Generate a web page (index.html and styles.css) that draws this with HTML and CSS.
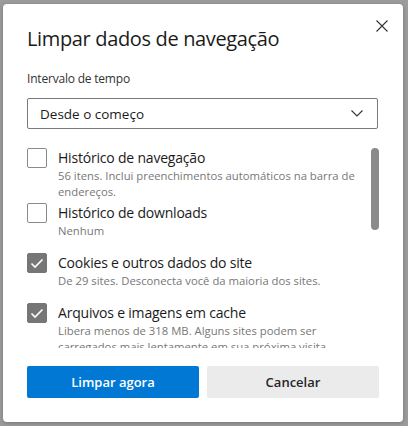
FILE: index.html
```html
<!DOCTYPE html>
<html lang="pt-BR">
<head>
<meta charset="utf-8">
<title>Limpar dados de navegação</title>
<link rel="stylesheet" href="styles.css">
</head>
<body>
<div class="backdrop">
  <div class="dialog">
    <button class="close" aria-label="Fechar">
      <svg width="12" height="12" viewBox="0 0 12 12"><path d="M0.5 0.5 L11.5 11.5 M11.5 0.5 L0.5 11.5" stroke="#333" stroke-width="1.1" fill="none"/></svg>
    </button>
    <h1 class="title">Limpar dados de navegação</h1>
    <div class="field-label">Intervalo de tempo</div>
    <div class="select">
      <span>Desde o começo</span>
      <svg width="12" height="7" viewBox="0 0 12 7"><path d="M0.5 0.5 L6 6 L11.5 0.5" stroke="#333" stroke-width="1.1" fill="none"/></svg>
    </div>
    <div class="list">
      <div class="items">
        <div class="item tall">
          <span class="cb"></span>
          <div class="text">
            <div class="label">Histórico de navegação</div>
            <div class="desc">56 itens. Inclui preenchimentos automáticos na barra de endereços.</div>
          </div>
        </div>
        <div class="item">
          <span class="cb"></span>
          <div class="text">
            <div class="label">Histórico de downloads</div>
            <div class="desc">Nenhum</div>
          </div>
        </div>
        <div class="item">
          <span class="cb checked"><svg width="14" height="11" viewBox="0 0 14 11"><path d="M1.5 5.5 L5 9 L12.5 1.5" stroke="#fff" stroke-width="1.6" fill="none"/></svg></span>
          <div class="text">
            <div class="label">Cookies e outros dados do site</div>
            <div class="desc">De 29 sites. Desconecta você da maioria dos sites.</div>
          </div>
        </div>
        <div class="item">
          <span class="cb checked"><svg width="14" height="11" viewBox="0 0 14 11"><path d="M1.5 5.5 L5 9 L12.5 1.5" stroke="#fff" stroke-width="1.6" fill="none"/></svg></span>
          <div class="text">
            <div class="label">Arquivos e imagens em cache</div>
            <div class="desc">Libera menos de 318 MB. Alguns sites podem ser carregados mais lentamente em sua próxima visita.</div>
          </div>
        </div>
      </div>
      <div class="scrollbar"></div>
    </div>
    <div class="actions">
      <button class="btn primary">Limpar agora</button>
      <button class="btn secondary">Cancelar</button>
    </div>
  </div>
</div>
</body>
</html>
```

FILE: styles.css
```css
* { box-sizing: border-box; }
html, body {
  margin: 0;
  padding: 0;
  background: #9c9c9c;
}
body {
  font-family: "Open Sans", "Noto Sans", sans-serif;
  color: #1b1b1b;
}
.backdrop {
  padding: 4px 5px 4px 3px;
  height: 426px;
}
.dialog {
  position: relative;
  width: 400px;
  height: 418px;
  background: #fff;
  border-radius: 4px;
  box-shadow: 0 1px 4px rgba(0,0,0,0.25);
  padding: 0 24px;
  display: flex;
  flex-direction: column;
}
.close {
  position: absolute;
  top: 12px;
  right: 11px;
  width: 20px;
  height: 20px;
  border: 0;
  background: none;
  padding: 4px;
  display: flex;
}
.title {
  margin: 21px 0 0;
  font-size: 20px;
  letter-spacing: -0.35px;
  font-weight: 400;
  line-height: 28px;
  color: #1b1b1b;
}
.field-label {
  margin-top: 17px;
  font-size: 12px;
  letter-spacing: -0.2px;
  line-height: 18px;
  color: #333;
}
.select {
  margin-top: 10px;
  height: 31px;
  width: 351px;
  border: 1.5px solid #7a7a7a;
  border-radius: 2px;
  display: flex;
  align-items: center;
  justify-content: space-between;
  padding: 0 14px 0 12px;
  font-size: 13.5px;
  color: #1b1b1b;
}
.list {
  position: relative;
  margin-top: 19px;
  height: 200px;
  overflow: hidden;
  width: 352px;
}
.items {
  display: flex;
  flex-direction: column;
}
.item {
  display: flex;
  gap: 11px;
  min-height: 50px;
}
.item.tall { min-height: 55px; }
.cb {
  flex: none;
  width: 20px;
  height: 20px;
  border: 1px solid #8a8a8a;
  border-radius: 2px;
  display: flex;
  align-items: center;
  justify-content: center;
}
.cb.checked {
  background: #767676;
  border-color: #767676;
}
.text { flex: none; width: 302px; }
.label {
  font-size: 14px;
  letter-spacing: -0.2px;
  line-height: 20px;
  color: #1b1b1b;
}
.desc {
  font-size: 11.3px;
  line-height: 16px;
  color: #777;
}
.scrollbar {
  position: absolute;
  right: 0;
  top: 0;
  width: 8px;
  height: 82px;
  border-radius: 4px;
  background: #8a8a8a;
}
.actions {
  margin-top: 18px;
  display: grid;
  grid-template-columns: 172px 172px;
  gap: 8px;
}
.btn {
  height: 32px;
  border: 0;
  border-radius: 2px;
  font-family: "Open Sans", "Noto Sans", sans-serif;
  font-size: 13px;
  font-weight: 600;
}
.primary { background: #0078d4; color: #fff; }
.secondary { background: #ebebeb; color: #262626; }
```
